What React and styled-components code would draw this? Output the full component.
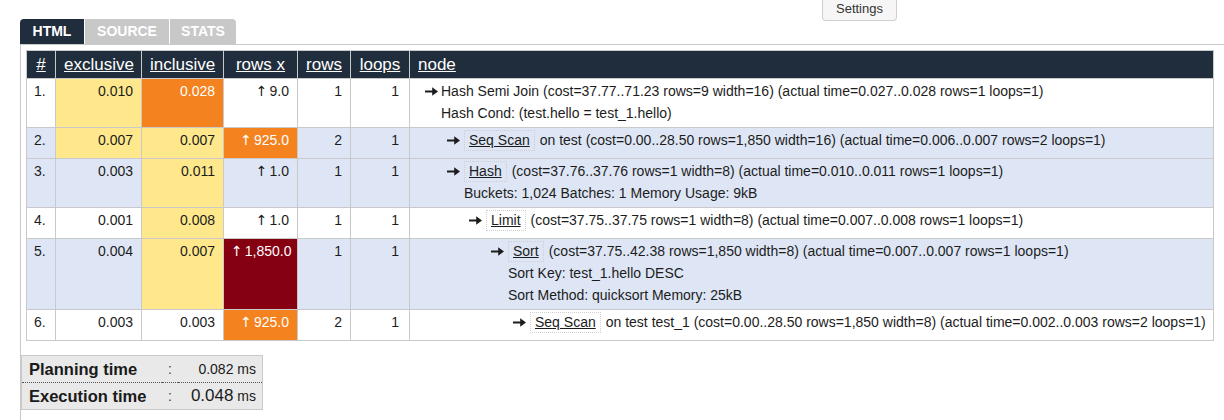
import React from 'react';
import styled, { createGlobalStyle } from 'styled-components';

const GlobalStyle = createGlobalStyle`
  html, body {
    margin: 0;
    padding: 0;
    background: #fff;
    overflow: hidden;
  }
  body {
    font-family: "Liberation Sans", Arial, Helvetica, sans-serif;
    font-size: 14px;
    color: #1c1c1c;
  }
`;

const HEAD_BG = '#1f2d3c';
const BORDER = '#c9c9c9';

const shades = {
  y: { bg: '#fee88b', fg: '#1c1c1c' },
  o: { bg: '#f4821f', fg: '#fff' },
  r: { bg: '#850011', fg: '#fff' },
};

const plan = [
  {
    n: 1, excl: '0.010', exclC: 'y', incl: '0.028', inclC: 'o', rowsx: '9.0', rowsxC: null,
    rows: '1', loops: '1', blue: false, level: 0, name: 'Hash Semi Join', boxed: false,
    text: '(cost=37.77..71.23 rows=9 width=16) (actual time=0.027..0.028 rows=1 loops=1)',
    details: ['Hash Cond: (test.hello = test_1.hello)'],
  },
  {
    n: 2, excl: '0.007', exclC: 'y', incl: '0.007', inclC: 'y', rowsx: '925.0', rowsxC: 'o',
    rows: '2', loops: '1', blue: true, level: 1, name: 'Seq Scan', boxed: true,
    text: 'on test (cost=0.00..28.50 rows=1,850 width=16) (actual time=0.006..0.007 rows=2 loops=1)',
    details: [],
  },
  {
    n: 3, excl: '0.003', exclC: null, incl: '0.011', inclC: 'y', rowsx: '1.0', rowsxC: null,
    rows: '1', loops: '1', blue: true, level: 1, name: 'Hash', boxed: true,
    text: '(cost=37.76..37.76 rows=1 width=8) (actual time=0.010..0.011 rows=1 loops=1)',
    details: ['Buckets: 1,024 Batches: 1 Memory Usage: 9kB'],
  },
  {
    n: 4, excl: '0.001', exclC: null, incl: '0.008', inclC: 'y', rowsx: '1.0', rowsxC: null,
    rows: '1', loops: '1', blue: false, level: 2, name: 'Limit', boxed: true,
    text: '(cost=37.75..37.75 rows=1 width=8) (actual time=0.007..0.008 rows=1 loops=1)',
    details: [],
  },
  {
    n: 5, excl: '0.004', exclC: null, incl: '0.007', inclC: 'y', rowsx: '1,850.0', rowsxC: 'r',
    rows: '1', loops: '1', blue: true, level: 3, name: 'Sort', boxed: true,
    text: '(cost=37.75..42.38 rows=1,850 width=8) (actual time=0.007..0.007 rows=1 loops=1)',
    details: ['Sort Key: test_1.hello DESC', 'Sort Method: quicksort Memory: 25kB'],
  },
  {
    n: 6, excl: '0.003', exclC: null, incl: '0.003', inclC: null, rowsx: '925.0', rowsxC: 'o',
    rows: '2', loops: '1', blue: false, level: 4, name: 'Seq Scan', boxed: true,
    text: 'on test test_1 (cost=0.00..28.50 rows=1,850 width=8) (actual time=0.002..0.003 rows=2 loops=1)',
    details: [],
  },
];

const Page = styled.div`
  padding-left: 20px;
`;

const TopBar = styled.div`
  display: flex;
  align-items: flex-start;
  height: 44px;
`;

const TabList = styled.div`
  display: flex;
  gap: 1px;
  margin-top: 19px;
`;

const Tab = styled.div`
  width: ${(p) => p.$w}px;
  height: 25px;
  line-height: 25px;
  text-align: center;
  font-size: 14px;
  font-weight: bold;
  color: #fff;
  background: ${(p) => (p.$active ? HEAD_BG : '#c8c8c8')};
  &:first-child { border-top-left-radius: 4px; }
  &:last-child { border-top-right-radius: 4px; }
`;

const SettingsButton = styled.button`
  margin-left: 586px;
  width: 75px;
  height: 21px;
  padding: 0 0 3px;
  line-height: 18px;
  font-family: inherit;
  font-size: 13px;
  color: #333;
  background: #f6f6f6;
  border: 1px solid #cfcfcf;
  border-top: none;
  border-radius: 0 0 4px 4px;
`;

const Content = styled.div`
  border-top: 1px solid ${BORDER};
  border-left: 1px solid ${BORDER};
  padding-top: 5px;
  min-height: calc(100vh - 50px);
`;

const PlanTable = styled.table`
  border-collapse: collapse;
  table-layout: fixed;
  width: calc(100% - 15px);
  margin: 0 10px 0 5px;
  border: 1px solid ${BORDER};
`;

const HeadCell = styled.th`
  background: ${HEAD_BG};
  color: #fff;
  font-weight: normal;
  font-size: 17px;
  line-height: 27px;
  padding: 0 8px;
  text-align: ${(p) => p.$align || 'center'};
  text-decoration: underline;
  border: 1px solid ${BORDER};
  white-space: nowrap;
`;

const Row = styled.tr`
  background: ${(p) => (p.$blue ? '#dee6f5' : '#fff')};
`;

const NumCell = styled.td`
  border: 1px solid ${BORDER};
  vertical-align: top;
  line-height: 22px;
  padding: 1px ${(p) => p.$pr || 8}px 7px 7px;
  text-align: ${(p) => p.$align || 'right'};
  white-space: nowrap;
  background: ${(p) => (p.$shade ? shades[p.$shade].bg : 'transparent')};
  color: ${(p) => (p.$shade ? shades[p.$shade].fg : '#1c1c1c')};
`;

const UpArrow = styled.span`
  font-family: "DejaVu Sans", sans-serif;
  font-size: 14px;
  margin-right: 2px;
`;

const NodeCell = styled.td`
  border: 1px solid ${BORDER};
  vertical-align: top;
  padding: 1px 6px 3px 15px;
  line-height: 22px;
  white-space: nowrap;
`;

const NodeLine = styled.div`
  display: flex;
  align-items: center;
  height: 22px;
  padding-left: ${(p) => p.$level * 22}px;
`;

const ArrowIcon = styled.svg`
  flex: none;
  width: 13px;
  height: 9px;
  margin-right: 3px;
`;

const NodeName = styled.span`
  display: inline-block;
  line-height: 19px;
  padding: 0 4px;
  margin: 0 5px 0 1px;
  border: 1px dotted #cfcfcf;
  text-decoration: underline;
`;

const PlainName = styled.span`
  margin-right: 4px;
`;

const Detail = styled.div`
  height: 22px;
  padding-left: ${(p) => p.$indent}px;
`;

const Summary = styled.div`
  display: grid;
  grid-template-columns: 140px 16px 84px;
  width: 240px;
  margin-top: 14px;
  background: #e9e9e9;
  border: 1px solid ${BORDER};
`;

const SummaryRow = styled.div`
  display: contents;
  & > * {
    height: 26px;
    line-height: 26px;
    border-bottom: ${(p) => (p.$sep ? '1px dotted #555' : '0')};
  }
`;

const Label = styled.div`
  padding-left: 7px;
  font-size: 16.5px;
  font-weight: bold;
  color: #1a1a1a;
`;

const Colon = styled.div`
  text-align: center;
  font-size: 14px;
  color: #444;
`;

const Value = styled.div`
  text-align: right;
  padding-right: 6px;
  font-size: 14px;
  color: #1a1a1a;
`;

const BigNum = styled.span`
  font-size: ${(p) => (p.$big ? 17 : 14)}px;
`;

const Arrow = () => (
  <ArrowIcon viewBox="0 0 13 9">
    <path d="M0 3.4h7.2V0.3L13 4.5 7.2 8.7V5.6H0z" fill="#1c1c1c" />
  </ArrowIcon>
);

const cols = [
  { key: '#', w: 29 },
  { key: 'exclusive', w: 86 },
  { key: 'inclusive', w: 82 },
  { key: 'rows x', w: 74 },
  { key: 'rows', w: 53 },
  { key: 'loops', w: 59 },
];

export default function App() {
  return (
    <Page>
      <GlobalStyle />
      <TopBar>
        <TabList>
          <Tab $w={64} $active>HTML</Tab>
          <Tab $w={84}>SOURCE</Tab>
          <Tab $w={66}>STATS</Tab>
        </TabList>
        <SettingsButton>Settings</SettingsButton>
      </TopBar>
      <Content>
        <PlanTable>
          <colgroup>
            {cols.map((c) => (
              <col key={c.key} style={{ width: c.w }} />
            ))}
            <col />
          </colgroup>
          <thead>
            <tr>
              {cols.map((c) => (
                <HeadCell key={c.key}>{c.key}</HeadCell>
              ))}
              <HeadCell $align="left">node</HeadCell>
            </tr>
          </thead>
          <tbody>
            {plan.map((r) => (
              <Row key={r.n} $blue={r.blue}>
                <NumCell $align="left">{r.n}.</NumCell>
                <NumCell $shade={r.exclC}>{r.excl}</NumCell>
                <NumCell $shade={r.inclC}>{r.incl}</NumCell>
                <NumCell $shade={r.rowsxC}>
                  <UpArrow>↑</UpArrow>{r.rowsx}
                </NumCell>
                <NumCell>{r.rows}</NumCell>
                <NumCell $pr={10}>{r.loops}</NumCell>
                <NodeCell>
                  <NodeLine $level={r.level}>
                    <Arrow />
                    {r.boxed ? <NodeName>{r.name}</NodeName> : <PlainName>{r.name}</PlainName>}
                    <span>{r.text}</span>
                  </NodeLine>
                  {r.details.map((d) => (
                    <Detail key={d} $indent={r.level * 22 + (r.boxed ? 17 : 16)}>
                      {d}
                    </Detail>
                  ))}
                </NodeCell>
              </Row>
            ))}
          </tbody>
        </PlanTable>
        <Summary>
          <SummaryRow $sep>
            <Label>Planning time</Label>
            <Colon>:</Colon>
            <Value>
              <BigNum>0.082</BigNum> ms
            </Value>
          </SummaryRow>
          <SummaryRow>
            <Label>Execution time</Label>
            <Colon>:</Colon>
            <Value>
              <BigNum $big>0.048</BigNum> ms
            </Value>
          </SummaryRow>
        </Summary>
      </Content>
    </Page>
  );
}
